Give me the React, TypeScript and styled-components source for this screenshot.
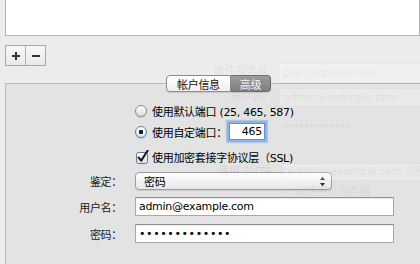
import styled, { createGlobalStyle } from 'styled-components';

const font = `"DejaVu Sans", "Noto Sans CJK SC", sans-serif`;

const Global = createGlobalStyle`
  html, body {
    margin: 0;
    padding: 0;
    background: #ececec;
  }
  body {
    font-family: ${font};
    font-size: 11px;
    letter-spacing: -0.3px;
    color: #000;
  }
`;

const Page = styled.div`
  position: relative;
  width: 420px;
  height: 264px;
  overflow: hidden;
  padding-left: 5px;
  box-sizing: border-box;
  background: #ececec;
`;

const ListBox = styled.div`
  height: 36px;
  box-sizing: border-box;
  background: #fff;
  border: 1px solid #b4b4b4;
  border-top: none;
`;

const ButtonBar = styled.div`
  display: flex;
  margin-top: 9px;
  width: 41px;
  height: 21px;
  box-sizing: border-box;
  border: 1px solid #a9a9a9;
  background: linear-gradient(#f8f8f8, #e9e9e9);
`;

const BarButton = styled.button<{ $last?: boolean }>`
  flex: 1;
  display: flex;
  align-items: center;
  justify-content: center;
  padding: 0;
  border: none;
  border-left: ${(p) => (p.$last ? '1px solid #b0b0b0' : 'none')};
  background: transparent;
  color: #3a3a3a;
`;

const TabRow = styled.div`
  display: flex;
  margin-top: 9px;
  padding-left: 161px;
  height: 17px;
  position: relative;
  z-index: 2;
`;

const Tab = styled.div<{ $active?: boolean; $first?: boolean }>`
  display: flex;
  align-items: center;
  justify-content: center;
  height: 17px;
  box-sizing: border-box;
  padding: 0 ${(p) => (p.$first ? '10px' : '9px')};
  font-size: 11px;
  border: 1px solid ${(p) => (p.$active ? '#6f6f6f' : '#8e8e8e')};
  border-left: ${(p) => (p.$first ? undefined : 'none')};
  border-radius: ${(p) => (p.$first ? '4px 0 0 4px' : '0 4px 4px 0')};
  background: ${(p) =>
    p.$active ? 'linear-gradient(#9c9c9c, #7e7e7e)' : 'linear-gradient(#ffffff, #f0f0f0)'};
  color: ${(p) => (p.$active ? '#f4f4f4' : '#111')};
  box-shadow: 0 1px 1px rgba(0, 0, 0, 0.12);
`;

const Panel = styled.div`
  margin-top: -9px;
  height: 200px;
  width: 440px;
  box-sizing: border-box;
  background: #e3e3e3;
  border-top: 1px solid #b9b9b9;
  border-left: 1px solid #bdbdbd;
  display: grid;
  grid-template-columns: 116px 1fr;
  column-gap: 13px;
  align-content: start;
`;

const Label = styled.div<{ $mt: number; $h: number }>`
  grid-column: 1;
  margin-top: ${(p) => p.$mt}px;
  height: ${(p) => p.$h}px;
  display: flex;
  align-items: center;
  justify-content: flex-end;
  color: #222;
`;

const Control = styled.div<{ $mt: number; $h: number }>`
  grid-column: 2;
  margin-top: ${(p) => p.$mt}px;
  height: ${(p) => p.$h}px;
  display: flex;
  align-items: center;
  gap: 5px;
`;

const Radio = styled.span<{ $on?: boolean }>`
  width: 12px;
  height: 12px;
  box-sizing: border-box;
  border-radius: 50%;
  border: 1px solid ${(p) => (p.$on ? '#5f7fa8' : '#8a8a8a')};
  background: ${(p) =>
    p.$on
      ? 'radial-gradient(circle, #1c1c1c 0 2px, transparent 2.5px), linear-gradient(#ffffff, #d8e2ee)'
      : 'linear-gradient(#ffffff, #dedede)'};
  box-shadow: 0 1px 1px rgba(0, 0, 0, 0.12);
  flex-shrink: 0;
`;

const PortInput = styled.div`
  margin-left: -3px;
  width: 36px;
  height: 17px;
  box-sizing: border-box;
  background: #fff;
  border: 1px solid #6d8fc0;
  box-shadow: 0 0 0 2px #8fb4e8, 0 0 1px 3px rgba(120, 160, 220, 0.45);
  display: flex;
  align-items: center;
  justify-content: flex-end;
  padding-right: 2px;
`;

const Popup = styled.div`
  width: 197px;
  height: 18px;
  box-sizing: border-box;
  border: 1px solid #9c9c9c;
  border-radius: 4px;
  background: linear-gradient(#ffffff, #f2f2f2 55%, #e6e6e6);
  box-shadow: 0 1px 1px rgba(0, 0, 0, 0.1);
  display: flex;
  align-items: center;
  justify-content: space-between;
  padding: 0 5px 0 8px;
`;

const Field = styled.div`
  width: 259px;
  height: 19px;
  box-sizing: border-box;
  background: #fff;
  border: 1px solid #a8a8a8;
  border-top-color: #8e8e8e;
  box-shadow: inset 0 1px 1px rgba(0, 0, 0, 0.08);
  display: flex;
  align-items: center;
  padding-left: 3px;
  font-size: 11px;
`;

const Dots = styled.span`
  letter-spacing: 0.6px;
  font-size: 11px;
`;

const Ghost = styled.div`
  position: absolute;
  inset: 0;
  pointer-events: none;
  color: rgba(0, 0, 0, 0.07);
  font-size: 11px;
`;

const GhostText = styled.span<{ $x: number; $y: number }>`
  position: absolute;
  left: ${(p) => p.$x}px;
  top: ${(p) => p.$y}px;
  white-space: nowrap;
  line-height: 12px;
`;

const GhostBox = styled.div<{ $x: number; $y: number; $w: number; $h: number }>`
  position: absolute;
  left: ${(p) => p.$x}px;
  top: ${(p) => p.$y}px;
  width: ${(p) => p.$w}px;
  height: ${(p) => p.$h}px;
  background: rgba(255, 255, 255, 0.22);
  border: 1px solid rgba(0, 0, 0, 0.04);
  box-sizing: border-box;
`;

function CheckBox() {
  return (
    <svg width="14" height="14" viewBox="0 0 14 14" style={{ flexShrink: 0, marginLeft: 1, marginRight: -3 }}>
      <defs>
        <linearGradient id="cb" x1="0" y1="0" x2="0" y2="1">
          <stop offset="0" stopColor="#ffffff" />
          <stop offset="1" stopColor="#d6dfea" />
        </linearGradient>
      </defs>
      <rect x="0.5" y="2.5" width="11" height="11" rx="2" fill="url(#cb)" stroke="#60789a" />
      <path d="M2.6 7.6 L5.2 10.6 L11.6 0.8" fill="none" stroke="#1a1a1a" strokeWidth="2.1" strokeLinecap="round" strokeLinejoin="round" />
    </svg>
  );
}

function Stepper() {
  return (
    <svg width="7" height="11" viewBox="0 0 7 11">
      <path d="M3.5 0.8 L6 4 L1 4 Z" fill="#2a2a2a" />
      <path d="M3.5 10.2 L6 7 L1 7 Z" fill="#2a2a2a" />
    </svg>
  );
}

export default function App() {
  return (
    <Page>
      <Global />
      <ListBox />
      <ButtonBar>
        <BarButton aria-label="添加">
          <svg width="10" height="10" viewBox="0 0 10 10">
            <path d="M5 1v8M1 5h8" stroke="#333" strokeWidth="2" />
          </svg>
        </BarButton>
        <BarButton $last aria-label="删除">
          <svg width="10" height="10" viewBox="0 0 10 10">
            <path d="M1 5h8" stroke="#333" strokeWidth="2" />
          </svg>
        </BarButton>
      </ButtonBar>
      <TabRow>
        <Tab $first>帐户信息</Tab>
        <Tab $active>高级</Tab>
      </TabRow>
      <Panel>
        <Control $mt={20} $h={14}>
          <Radio />
          <span>使用默认端口 (25, 465, 587)</span>
        </Control>
        <Control $mt={3} $h={21}>
          <Radio $on />
          <span>使用自定端口：</span>
          <PortInput>465</PortInput>
        </Control>
        <Control $mt={8} $h={14}>
          <CheckBox />
          <span>使用加密套接字协议层（SSL)</span>
        </Control>
        <Label $mt={8} $h={18}>鉴定：</Label>
        <Control $mt={8} $h={18}>
          <Popup>
            <span>密码</span>
            <Stepper />
          </Popup>
        </Control>
        <Label $mt={7} $h={19}>用户名：</Label>
        <Control $mt={7} $h={19}>
          <Field>admin@example.com</Field>
        </Control>
        <Label $mt={8} $h={19}>密码：</Label>
        <Control $mt={8} $h={19}>
          <Field>
            <Dots>•••••••••••••</Dots>
          </Field>
        </Control>
      </Panel>
      <Ghost aria-hidden>
        <GhostText $x={214} $y={66}>收件服务器:</GhostText>
        <GhostBox $x={278} $y={63} $w={150} $h={20} />
        <GhostText $x={283} $y={67}>pop.corpease.net</GhostText>
        <GhostText $x={230} $y={92}>用户名:</GhostText>
        <GhostBox $x={278} $y={88} $w={150} $h={19} />
        <GhostText $x={283} $y={92}>admin@example.com</GhostText>
        <GhostText $x={283} $y={122}>*************</GhostText>
        <GhostText $x={218} $y={166}>使用 SMTP</GhostText>
        <GhostBox $x={282} $y={163} $w={150} $h={18} />
        <GhostText $x={287} $y={166}>admin@example.com（用</GhostText>
        <GhostText $x={283} $y={186}>✓ 仅使用此服务器</GhostText>
      </Ghost>
    </Page>
  );
}
